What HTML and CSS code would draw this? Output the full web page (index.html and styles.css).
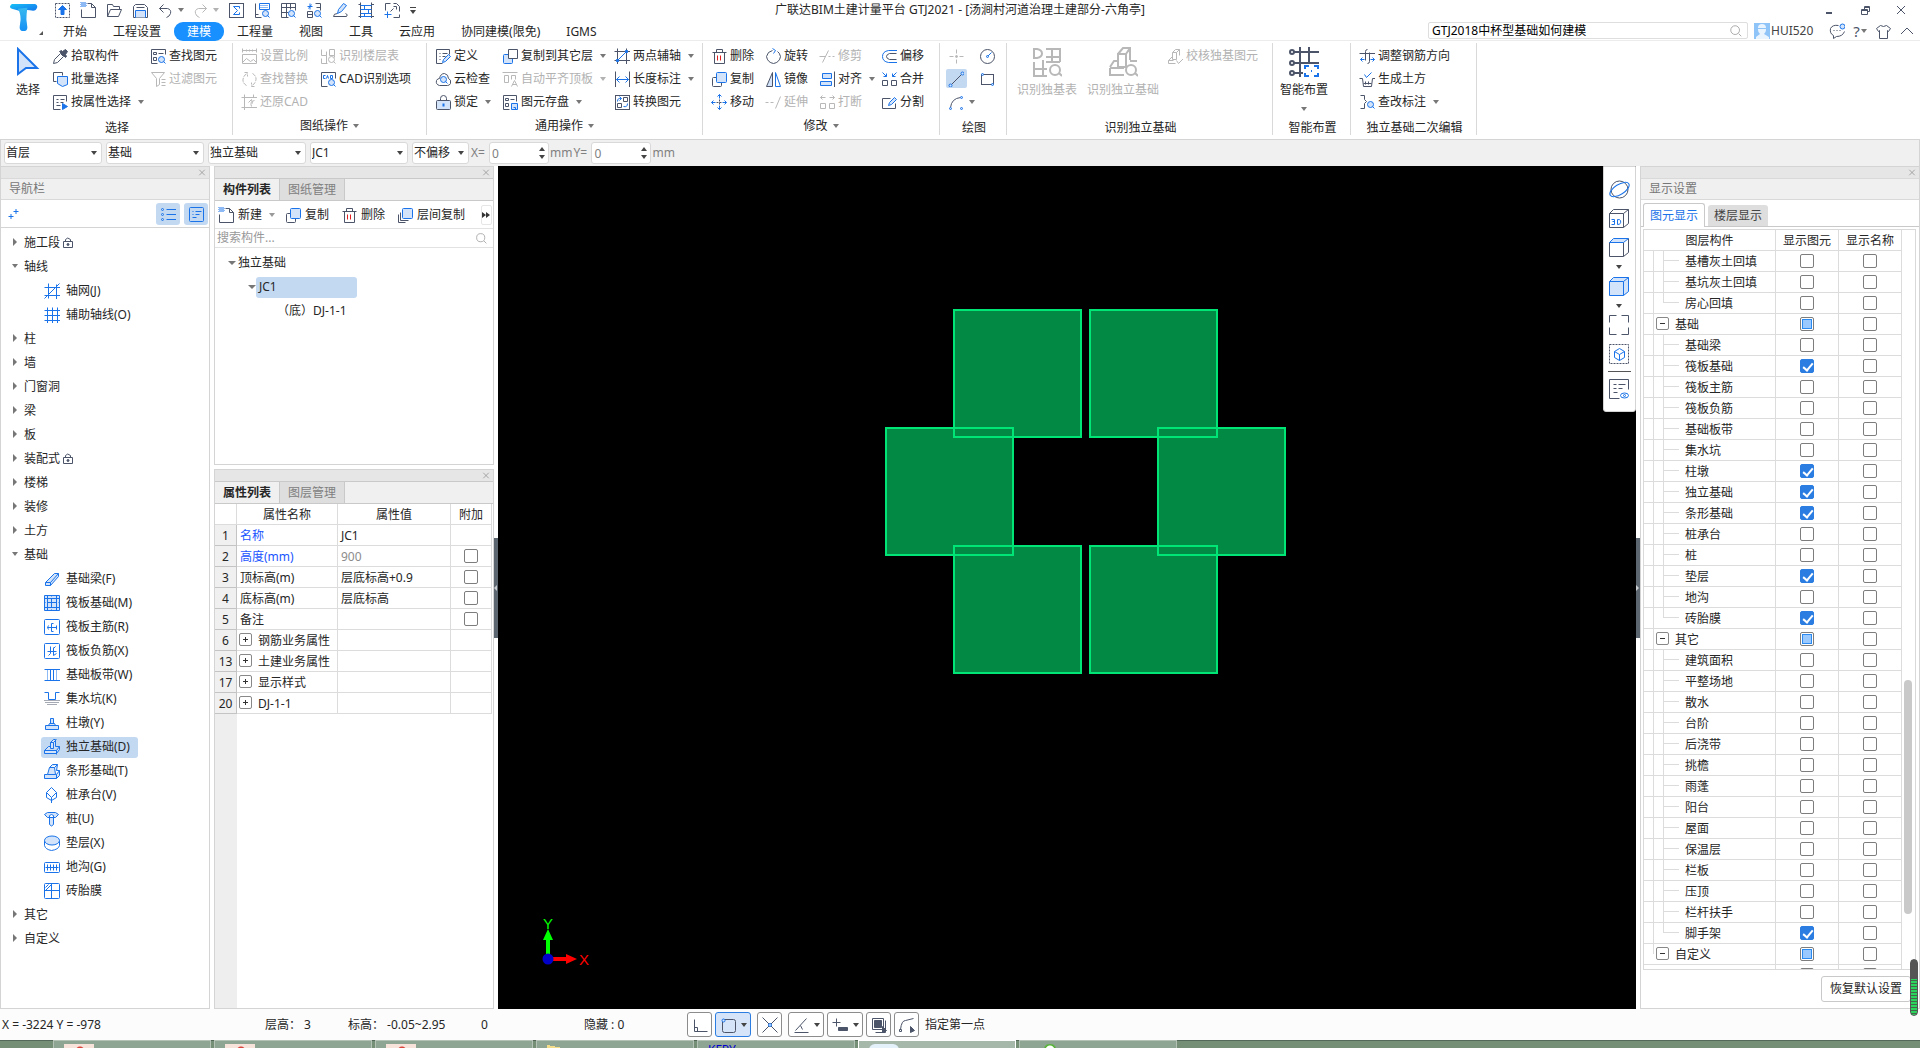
FILE: index.html
```
<!DOCTYPE html>
<html lang="zh-CN">
<head>
<meta charset="utf-8">
<title>广联达BIM土建计量平台 GTJ2021</title>
<link rel="stylesheet" href="styles.css">
</head>
<body>
<svg class="sprite" aria-hidden="true">
  <defs>
    <linearGradient id="logo-grad" x1="0" y1="0" x2="1" y2="1"><stop offset="0" stop-color="#19c3f5"/><stop offset=".5" stop-color="#1597f2"/><stop offset="1" stop-color="#1272ea"/></linearGradient>
    <linearGradient id="logo-stem" x1="0" y1="0" x2="0" y2="1"><stop offset="0" stop-color="#39b9ee"/><stop offset="1" stop-color="#1590f5"/></linearGradient>
  </defs>
  <symbol id="upload" viewBox="-.5 -.5 16 16"><rect x="1" y="1" width="14" height="14" stroke-dasharray="2 1"/><path class="b fill" d="M8 3l4 4H9.500v5h-3V7H4z"/></symbol>
  <symbol id="new" viewBox="-.5 -.5 16 16"><path d="M7 1h4l4 4v10H1V7M11 1v4h4"/><path class="b" stroke-dasharray="1 1" d="M0 0h5M1 1h5M0 2h5M1 3h5M0 4h5"/></symbol>
  <symbol id="open" viewBox="-.5 -.5 16 16"><path d="M1 14V2h5l1 2h6v3M1 14L4 7h11l-3 7z"/></symbol>
  <symbol id="save" viewBox="-.5 -.5 16 16"><path d="M3 2h9l3 3v10H1V4z"/><path class="bf" d="M3 15V8h10v7"/><path d="M4 5h8"/></symbol>
  <symbol id="undo" viewBox="-.5 -.5 16 16"><path d="M2 6h8q4 1 3 5-1 3-4 4M6 2L2 6l4 4"/></symbol>
  <symbol id="redo" viewBox="-.5 -.5 16 16"><path d="M14 6H6Q2 7 3 11q1 3 4 4M10 2l4 4-4 4"/></symbol>
  <symbol id="sigma" viewBox="-.5 -.5 16 16"><rect x="1" y="1" width="14" height="14"/><path class="b" d="M11 6V4H5l4 4-4 4h6v-2"/></symbol>
  <symbol id="calc" viewBox="-.5 -.5 16 16"><path d="M1 1v14h6M1 12h3"/><path class="b" d="M5 1h10v6H5z"/><path class="b" stroke-dasharray="1 1" d="M6 3h8M6 5h8"/><circle class="bf" cx="11" cy="11" r="3"/><path class="b" d="M13 13l2 2"/></symbol>
  <symbol id="gridfind" viewBox="-.5 -.5 16 16"><path d="M8 15H1V1h14v7M6 1v14M10 1v6M1 5h14M1 10h7"/><circle class="bf" cx="11" cy="11" r="3"/><path class="b" d="M13 13l2 2"/></symbol>
  <symbol id="viewfind" viewBox="-.5 -.5 16 16"><path d="M9 1h5v7M10 5h4M1 9h5v6H1zM1 12h5"/><path class="b" d="M1 4h5M3.500 1v6M5 2L2 6"/><circle class="bf" cx="11" cy="11" r="3"/><path class="b" d="M13 13l2 2"/></symbol>
  <symbol id="brush" viewBox="-.5 -.5 16 16"><path d="M1 14h13q2-2-1-3M5 11q-4 0-4 3"/><path class="bf" d="M5 11l1-4 5-6 3 2-5 6z"/></symbol>
  <symbol id="ladder" viewBox="-.5 -.5 16 16"><path d="M2 0v16M13 0v16M0 2h2M0 14h2M13 2h3M13 14h3"/><path class="b" d="M2 3h11M2 7h11M2 11h11M2 14h11M6 3v4M10 7v4M6 11v3"/></symbol>
  <symbol id="frameadd" viewBox="-.5 -.5 16 16"><path d="M1 8V1h5M9 1h3l3 3v5M15 12v3H9M9 4h3v3M6 9l3-3"/><path class="b" d="M0 12h7M3 9v7"/></symbol>
  <symbol id="cursor" viewBox="0 0 30 30"><path class="bf thick" d="M5 2v25l8-6h11z"/></symbol>
  <symbol id="picker" viewBox="-.5 -.5 16 16"><path d="M1 15l1-4 6-6 3 3-6 6z"/><path class="kf" d="M7 3l6 6 1-1-1-2 2-3-2-2-3 2-1-1z"/></symbol>
  <symbol id="batch" viewBox="-.5 -.5 16 16"><path d="M4 10H1V1h9v3"/><path class="bf" d="M5 5h10v8l-5 2-5-3z"/></symbol>
  <symbol id="attrsel" viewBox="-.5 -.5 16 16"><path d="M8 15H1V1h13v6M4 5h2M8 5h4M4 8h2M8 8h3M4 11h4"/><path class="b fill" d="M10 9v6l5-3z"/></symbol>
  <symbol id="findelem" viewBox="-.5 -.5 16 16"><path d="M7 15H1V1h14v5M3 4h3v2H3zM8 5h5M3 9h3v3H3z"/><circle class="bf" cx="11" cy="11" r="3"/><path class="b" d="M13 13l2 2"/></symbol>
  <symbol id="filter" viewBox="-.5 -.5 16 16"><path d="M1 1h13L9 7v6l-3 2V7zM11 8h4M11 11h4M11 14h4"/></symbol>
  <symbol id="scale" viewBox="-.5 -.5 16 16"><path d="M1 2h14M1 0v4M15 0v4M5 1v2M8 1v2M11 1v2M1 6h14v9H1zM1 14l4-4 4 3 3-2 3 3"/></symbol>
  <symbol id="layertab" viewBox="-.5 -.5 16 16"><path d="M1 1v6h5V3M9 1h5v6H9zM1 10v5h6M6 7v8M14 7v2"/><circle cx="11" cy="11" r="3"/><path d="M13 13l2 2"/></symbol>
  <symbol id="swap" viewBox="-.5 -.5 16 16"><path d="M5 14Q0 11 2 6q1-3 4-4M3 1h3v4M11 2q5 3 3 8-1 3-4 4M13 15h-3v-4" stroke-dasharray="4 1"/></symbol>
  <symbol id="cad" viewBox="-.5 -.5 16 16"><path d="M7 15H1V1h14v6"/><path class="b" d="M5 4H3v3h2M6 7l1-3 1 3M10 4v3h2V4z"/><circle class="bf" cx="11" cy="11" r="3"/><path class="b" d="M13 13l2 2"/></symbol>
  <symbol id="restorecad" viewBox="-.5 -.5 16 16"><path d="M3 0v16M0 3h16M0 13h16M12 0v3M13 6q-5 1-3 6M7 8l3-3 1 4"/></symbol>
  <symbol id="define" viewBox="-.5 -.5 16 16"><path d="M7 15H1V1h13v5M4 5h1M7 5h5M4 8h1M7 8h3M4 11h1"/><path class="bf" d="M7 14l1-3 5-5 2 2-5 5z"/></symbol>
  <symbol id="cloud" viewBox="-.5 -.5 16 16"><path d="M4 14Q0 13 1 9q1-2 3-2 1-5 5-5 4 1 4 5 3 1 2 5-1 2-3 2z"/><circle class="bf" cx="8" cy="8" r="3"/><path class="b" d="M10 10l2 2"/></symbol>
  <symbol id="lock" viewBox="-.5 -.5 16 16"><path d="M5 6V4q0-3 3-3t3 3v2"/><rect class="kl" x="1" y="6" width="14" height="9" rx="1"/><path class="b thick" d="M8 9v3"/></symbol>
  <symbol id="copyto" viewBox="-.5 -.5 16 16"><rect class="bf" x="1" y="6" width="9" height="9" rx="1"/><path class="wf" d="M6 1h9v9H6z"/></symbol>
  <symbol id="align-top" viewBox="-.5 -.5 16 16"><path d="M0 1h15M2 4h4v7H2zM9 8V4h4v4M9 15l3-6 3 6M10 13h4"/></symbol>
  <symbol id="store" viewBox="-.5 -.5 16 16"><path d="M7 15H1V1h13v6M3 4h3v2H3zM8 5h4M3 9h3v3H3z"/><path class="bf" d="M9 9h6v6H9zM11 13h2v2"/></symbol>
  <symbol id="twopoint" viewBox="-.5 -.5 16 16"><path d="M3 0v16M12 0v16M0 3h16M0 12h16"/><path class="b" d="M3 12l9-9"/><path class="b fill" d="M2 11h2v2H2zM11 2h2v2h-2z"/></symbol>
  <symbol id="length" viewBox="-.5 -.5 16 16"><path d="M1 0v16M15 0v16"/><path class="b" d="M2 8h12M5 5L2 8l3 3M11 5l3 3-3 3"/></symbol>
  <symbol id="convert" viewBox="-.5 -.5 16 16"><rect x="1" y="1" width="14" height="14"/><path class="b" d="M3 7q0-4 4-3M5 2l2 2-2 2M13 9q0 4-4 3"/><path d="M9 3h4v4H9zM3 9h4v4H3z"/></symbol>
  <symbol id="trash" viewBox="-.5 -.5 16 16"><path d="M1 4h14M5 4V1h6v3M3 4v11h10V4"/><path class="r" d="M6 7v5M9 7v5"/></symbol>
  <symbol id="copy" viewBox="-.5 -.5 16 16"><rect x="1" y="6" width="9" height="9" rx="1"/><rect class="bf" x="5" y="1" width="10" height="10" rx="1"/></symbol>
  <symbol id="copies" viewBox="-.5 -.5 16 16"><path d="M1 7v8h7M3 5v8h8"/><rect class="bf" x="5" y="1" width="10" height="10" rx="1"/></symbol>
  <symbol id="move" viewBox="-.5 -.5 16 16"><path d="M8 5v6M5 8h6" stroke-dasharray="2 1"/><path class="b" d="M8 0v4M6 2l2-2 2 2M8 15v-4M6 13l2 2 2-2M0 8h4M2 6L0 8l2 2M15 8h-4M13 6l2 2-2 2"/></symbol>
  <symbol id="rotate" viewBox="-.5 -.5 16 16"><path d="M7 2Q2 3 1 8q1 6 7 7 6-1 7-7-1-4-3-5"/><path class="b" d="M7 0l3 2-2 3"/></symbol>
  <symbol id="mirror" viewBox="-.5 -.5 16 16"><path class="kl" d="M7 1v14H1z"/><path class="b" d="M10 1v14h5z"/></symbol>
  <symbol id="extend" viewBox="-.5 -.5 16 16"><path stroke-dasharray="3 2" d="M0 8h9"/><path d="M10 14L15 2"/></symbol>
  <symbol id="trim" viewBox="-.5 -.5 16 16"><path d="M0 8h6M3 14L9 2"/><path stroke-dasharray="2 2" d="M9 8h7"/></symbol>
  <symbol id="align" viewBox="-.5 -.5 16 16"><path d="M15 0v16"/><path class="bf" d="M3 2h9v5H3zM1 10h11v4H1z"/></symbol>
  <symbol id="break" viewBox="-.5 -.5 16 16"><path d="M1 9h5v5H1zM10 9h5v5h-5zM6 3H1M3 1L1 3l2 2M10 3h5M13 1l2 2-2 2"/></symbol>
  <symbol id="offset" viewBox="-.5 -.5 16 16"><path class="b" d="M16 2H7Q1 3 1 8q0 5 6 6h9"/><path d="M15 5H8Q5 6 5 8q0 2 3 3h7"/></symbol>
  <symbol id="merge" viewBox="-.5 -.5 16 16"><path d="M1 9h5v5H1zM10 9h5v5h-5z"/><path class="b" d="M1 1l4 4M5 2v3H2M15 1l-4 4M11 2v3h3"/></symbol>
  <symbol id="split" viewBox="-.5 -.5 16 16"><path d="M9 4H1v10h13V9"/><path class="bf" d="M7 11l1-3 5-5 2 2-5 5z"/></symbol>
  <symbol id="point" viewBox="-.5 -.5 16 16"><path d="M8 1v4M8 11v4M1 8h4M11 8h4"/><circle class="kf" cx="8" cy="8" r="1"/></symbol>
  <symbol id="line" viewBox="-.5 -.5 16 16"><path d="M3 13L13 3"/><circle class="bf" cx="2" cy="14" r="1.500"/><circle class="bf" cx="14" cy="2" r="1.500"/></symbol>
  <symbol id="arc" viewBox="-.5 -.5 16 16"><path d="M2 13Q3 4 12 3"/><circle class="bf" cx="2" cy="14" r="1"/><circle class="bf" cx="13" cy="3" r="1"/><circle class="bf" cx="13" cy="14" r="1"/></symbol>
  <symbol id="circle" viewBox="-.5 -.5 16 16"><circle cx="8" cy="8" r="7"/><path class="b" d="M8 8l4-4"/><circle class="bf" cx="8" cy="8" r="1"/></symbol>
  <symbol id="rect" viewBox="-.5 -.5 16 16"><rect x="2" y="3" width="12" height="10"/><circle class="bf" cx="3" cy="3" r="1"/><circle class="bf" cx="13" cy="13" r="1"/></symbol>
  <symbol id="table-id" viewBox="0 0 30 30"><path class="thick" d="M2 2v9h3q5-1 5-4.500T5 2zM14 2h14v13M14 10h14M20 2v13M14 15h14M2 15v14h13M11 13v16M2 22h13"/><circle class="thick" cx="23" cy="23" r="5"/><path class="thick" d="M27 26l3 3"/></symbol>
  <symbol id="found-id" viewBox="0 0 30 30"><path class="thick" d="M10 7h8v13h-8zM10 7l5-6h7v12M18 7l4-6M10 14H6l-4 6M2 21v7h14M2 21h14M22 14h7"/><circle class="thick" cx="23" cy="23" r="5"/><path class="thick" d="M27 26l3 3"/></symbol>
  <symbol id="check-id" viewBox="-.5 -.5 16 16"><path d="M5 4h4v7H5zM5 4l3-3h4v6M9 4l3-3M5 8L1 12v3h7M1 12h5M9 12l2 3 5-5"/></symbol>
  <symbol id="smart" viewBox="0 0 30 30"><path class="thick" d="M11 0v30M20 0v15M5 5h25M5 16h25M5 26h9"/><circle class="wf thick" cx="3" cy="5" r="2"/><circle class="wf thick" cx="3" cy="16" r="2"/><circle class="wf thick" cx="3" cy="26" r="2"/><path fill="#fff" stroke="none" d="M14 17h16v13H14z"/><path class="b thick" d="M16 22v-3h4M25 19h4v3M29 26v3h-4M20 29h-4v-3M22 24h1"/></symbol>
  <symbol id="rebar" viewBox="-.5 -.5 16 16"><path d="M0 5h16M6 12V3q0-2 2-2M10 4v9q0 2-2 2"/><path class="b" d="M5 11H1M3 9l-2 2 2 2M11 11h4M13 9l2 2-2 2"/></symbol>
  <symbol id="earth" viewBox="-.5 -.5 16 16"><path d="M0 7h3l1 8h8l1-8h3M4 12h8M6 10v3M9 10v3"/><path class="b" d="M5 3l2 3 5-5"/></symbol>
  <symbol id="note" viewBox="-.5 -.5 16 16"><path d="M1 1h4v4l2 2-2 2v5H1"/><circle class="bf" cx="11" cy="10" r="3"/><path class="b" d="M13 12l2 2"/></symbol>
  <symbol id="search" viewBox="0 0 16 16"><circle cx="7" cy="7" r="5"/><path d="M11 11l3 3"/></symbol>
  <symbol id="chat" viewBox="-.5 -.5 16 16"><path d="M9 2Q3 1 1 5q-1 5 3 7v3l3-2q6 0 8-5M4 7h1M7 7h1M10 7h1"/><circle class="bf" cx="13" cy="3" r="2.500"/></symbol>
  <symbol id="shirt" viewBox="-.5 -.5 16 16"><path d="M5 2q3 2 6 0l4 3-2 3-1-1v8H4V7L3 8 1 5z"/></symbol>
  <symbol id="chev" viewBox="0 0 16 16"><path d="M2 11l6-6 6 6"/></symbol>
  <symbol id="x" viewBox="0 0 16 16"><path d="M4 4l8 8M12 4l-8 8"/></symbol>
  <symbol id="restore" viewBox="-.5 -.5 16 16"><path d="M4 7h6v5H4zM4 8h6M7 7V4h5v5h-2M7 5h5"/></symbol>
  <symbol id="min" viewBox="0 0 16 16"><path class="thick" d="M5 11h6"/></symbol>
  <symbol id="stars" viewBox="-.5 -.5 16 16"><path class="b" d="M8 5h5M10.500 2.500v5M3 10h5M5.500 7.500v5"/></symbol>
  <symbol id="list" viewBox="-.5 -.5 16 16"><path class="b" d="M6 3h10M6 8h10M6 13h10"/><circle class="b" cx="2" cy="3" r="1"/><circle class="b" cx="2" cy="8" r="1"/><circle class="b" cx="2" cy="13" r="1"/></symbol>
  <symbol id="card" viewBox="-.5 -.5 16 16"><rect class="b" x="1" y="1" width="14" height="14" rx="1"/><path class="b" d="M4 5h1M7 5h6M4 8h1M7 8h4M4 11h4"/></symbol>
  <symbol id="padlock" viewBox="-.5 -.5 10 12"><path d="M2 4V2q2-3 5 0v2M0 4h9v6H0z"/><circle class="kf" cx="4.500" cy="7" r="1"/></symbol>
  <symbol id="axis" viewBox="-.5 -.5 16 16"><path class="b" d="M4 0v15M12 1v15M0 4h16M0 12h16M0 15L15 0"/></symbol>
  <symbol id="axis2" viewBox="-.5 -.5 16 16"><path class="b" d="M3 0v16M8 0v16M13 0v16M0 3h16M0 8h16M0 13h16"/></symbol>
  <symbol id="n-beam" viewBox="-.5 -.5 16 16"><path class="bf" d="M1 11L10 2h4v3L6 14H1zM1 11h5v3M6 11l8-9"/></symbol>
  <symbol id="n-raft" viewBox="-.5 -.5 16 16"><path class="bf" d="M0 0h15v15H0z"/><path class="b" d="M3 0v15M7 3v9M12 0v15M0 3h15M3 7h9M0 12h15M7 0v1M7 14v1M0 7h1M14 7h1"/></symbol>
  <symbol id="n-main" viewBox="-.5 -.5 16 16"><rect class="b" x="0" y="0" width="15" height="15" rx="1"/><path class="b" d="M3 8h9M4 6L3 8l1 2M12 6v4M7 12V4h2M9 12H7"/></symbol>
  <symbol id="n-neg" viewBox="-.5 -.5 16 16"><rect class="b" x="0" y="0" width="15" height="15" rx="1"/><path class="b" d="M3 8h9M6 3v7l-2 2M9 4v8M9 5l2-2M12 10l-3 2"/></symbol>
  <symbol id="n-strip" viewBox="-.5 -.5 16 16"><path class="b" d="M0 2h16M0 13h16"/><path class="b" stroke-dasharray="1 1" d="M3 3v10M12 3v10"/><path class="b" d="M6 2v11M9 2v11"/></symbol>
  <symbol id="n-pit" viewBox="-.5 -.5 16 16"><path class="b" d="M0 1h4v7h7V1h4"/><path stroke-dasharray="1 1" d="M0 9h16M1 11h14M3 13h10"/></symbol>
  <symbol id="n-pier" viewBox="-.5 -.5 16 16"><path class="bf" d="M1 10h13v4H1zM6 3h3v5H6zM4 10l1-2h5l1 2"/></symbol>
  <symbol id="n-found" viewBox="-.5 -.5 16 16"><path class="bf" d="M0 11l4-4h2V3l3-3h2v7h4v3l-3 4H0zM6 3h3v6H6zM9 3l3-3M0 11h12l3-4M12 11v4"/></symbol>
  <symbol id="n-bar" viewBox="-.5 -.5 16 16"><path class="bf" d="M0 11h3l2-7 3-3h5l-1 6h3v5l-3 3H0zM5 4h5l3-3M10 4l1 7h1l3-4M3 11h8M12 11v4"/></symbol>
  <symbol id="n-cap" viewBox="-.5 -.5 16 16"><path class="b" d="M7 0L2 5l5 5 5-5zM2 5v5l5 3 5-3V5M7 10v6"/></symbol>
  <symbol id="n-pile" viewBox="-.5 -.5 16 16"><path class="bf" d="M0 3l3-2h8l3 2-3 3H3zM5 4v9q2 3 4 0V4q-2-2-4 0"/></symbol>
  <symbol id="n-cushion" viewBox="-.5 -.5 16 16"><path class="b" d="M0 5v5q1 4 7 5 7-1 8-5V5"/><ellipse class="bf" cx="7.500" cy="5" rx="7.500" ry="4.500"/></symbol>
  <symbol id="n-trench" viewBox="-.5 -.5 16 16"><rect class="b" x="0" y="3" width="15" height="10" rx="1"/><path class="b" d="M1 8h13M3 5v6M6 5v6M9 5v6M12 5v6"/></symbol>
  <symbol id="n-brick" viewBox="-.5 -.5 16 16"><rect class="b" x="0" y="0" width="15" height="15" rx="1"/><path class="b" d="M7 0v15M0 7h15M1 4l3-3M1 7l6-6"/></symbol>
  <symbol id="v-orbit" viewBox="-.5 -.5 20 20"><circle cx="10" cy="10" r="8.500"/><ellipse class="b" cx="10" cy="10" rx="11" ry="5" transform="rotate(-32 10 10)"/></symbol>
  <symbol id="v-3d" viewBox="-.5 -.5 20 20"><path d="M0 5h14v14H0zM0 5l4-4h15v14l-5 4M14 5l5-4"/><path class="b" d="M2 11h3v5H2M3 13h2M8 11v5q4 0 3-4 0-1-3-1"/></symbol>
  <symbol id="v-top" viewBox="-.5 -.5 20 20"><path d="M0 5h14v14H0zM19 1v14l-5 4"/><path class="bf" d="M0 5l4-4h15l-5 4z"/></symbol>
  <symbol id="v-solid" viewBox="-.5 -.5 20 20"><path class="bf" d="M0 5l4-4h15v14l-5 4H0z"/><path class="b" d="M0 5h14v14M14 5l5-4"/></symbol>
  <symbol id="v-fit" viewBox="-.5 -.5 20 20"><path d="M0 7V0h7M12 0h7v7M19 12v7h-7M7 19H0v-7"/></symbol>
  <symbol id="v-part" viewBox="-.5 -.5 20 20"><rect x="0" y="0" width="19" height="19" stroke-dasharray="2 1"/><path class="b" d="M10 4l5 3v6l-5 3-5-3V7zM5 7l5 3 5-3M10 10v6"/></symbol>
  <symbol id="v-eye" viewBox="-.5 -.5 20 20"><path d="M10 19H0V0h19v10M4 5h3M9 5h7M4 9h3M9 9h4M4 13h4"/><ellipse class="b" cx="15" cy="16" rx="4" ry="2.500"/><circle class="b" cx="15" cy="16" r="1"/></symbol>
  <symbol id="s-ortho" viewBox="-.5 -.5 16 16"><path d="M2 2v12h13M2 10h3v4"/></symbol>
  <symbol id="s-snap" viewBox="-.5 -.5 16 16"><rect x="2" y="2" width="13" height="13" rx="2"/><circle class="bf" cx="3" cy="3" r="1.500"/></symbol>
  <symbol id="s-cross" viewBox="-.5 -.5 16 16"><path d="M0 0l15 15M15 0L0 15"/><circle class="bf" cx="7.500" cy="7.500" r="1.500"/></symbol>
  <symbol id="s-angle" viewBox="-.5 -.5 16 16"><path d="M2 13L13 1M1 15h14M7 8l2 4"/></symbol>
  <symbol id="s-plus" viewBox="-.5 -.5 16 16"><path d="M0 5h8M4 1v8"/><path class="kf" d="M6 10h9v3H6z"/></symbol>
  <symbol id="s-layers" viewBox="-.5 -.5 16 16"><path class="kf" d="M3 3h7v7H3z"/><path d="M1 1h11v11H1zM14 3v12H4"/><path class="kf" d="M11 9v6l4-2z"/></symbol>
  <symbol id="s-poly" viewBox="-.5 -.5 16 16"><path d="M1 12Q2 3 6 3l8-2M0 12h2v2H0z"/><path class="kf" d="M11 9v6l4-2z"/></symbol>
</svg>

<div class="app">
  <header class="top">
    <button class="logo" aria-label="主菜单">
      <svg class="logo-mark" viewBox="0 0 30 30"><path fill="url(#logo-grad)" d="M3 1h24q3 1 2 4-1 3-4 3-9-2-11 1L3 6Q-1 4 3 1z"/><path fill="url(#logo-stem)" d="M9 6l10-1q-1 7-1 12l1 8q0 4-4 4t-4-4l1-8q0-7-3-11z"/></svg>
      <span class="corner"></span>
    </button>
    <div class="titlebar">
      <div class="quick">
        <button aria-label="上传"><svg class="ic"><use href="#upload"/></svg></button>
        <button aria-label="新建"><svg class="ic"><use href="#new"/></svg></button>
        <button aria-label="打开"><svg class="ic"><use href="#open"/></svg></button>
        <button aria-label="保存"><svg class="ic"><use href="#save"/></svg></button>
        <button class="split" aria-label="撤销"><svg class="ic"><use href="#undo"/></svg><span class="caret"></span></button>
        <button class="split dim" aria-label="恢复"><svg class="ic"><use href="#redo"/></svg><span class="caret"></span></button>
        <button aria-label="汇总计算"><svg class="ic"><use href="#sigma"/></svg></button>
        <button aria-label="查看计算式"><svg class="ic"><use href="#calc"/></svg></button>
        <button aria-label="查看工程量"><svg class="ic"><use href="#gridfind"/></svg></button>
        <button aria-label="查看报表"><svg class="ic"><use href="#viewfind"/></svg></button>
        <button aria-label="格式刷"><svg class="ic"><use href="#brush"/></svg></button>
        <button aria-label="钢筋三维"><svg class="ic"><use href="#ladder"/></svg></button>
        <button aria-label="局部三维"><svg class="ic"><use href="#frameadd"/></svg></button>
        <button class="more" aria-label="更多"><span class="caret"></span></button>
      </div>
      <h1 class="title">广联达BIM土建计量平台 GTJ2021 - [汤涧村河道治理土建部分-六角亭]</h1>
      <div class="winbtns">
        <button aria-label="最小化"><svg class="ic"><use href="#min"/></svg></button>
        <button aria-label="还原"><svg class="ic"><use href="#restore"/></svg></button>
        <button aria-label="关闭"><svg class="ic"><use href="#x"/></svg></button>
      </div>
    </div>
    <div class="menubar">
      <nav class="menus">
        <button>开始</button><button>工程设置</button><button class="on">建模</button><button>工程量</button><button>视图</button><button>工具</button><button>云应用</button><button>协同建模(限免)</button><button>IGMS</button>
      </nav>
      <div class="account">
        <div class="find"><input type="text" aria-label="搜索" value="GTJ2018中杯型基础如何建模"><svg class="ic pale"><use href="#search"/></svg></div>
        <button class="user"><svg class="avatar" viewBox="0 0 16 16"><rect width="16" height="16" fill="#8fc4f8"/><path fill="#e9f4ff" d="M4 5q0-4 4-4t4 4v2q0 2-2 4l5 3v2H2v-2l4-3Q4 9 4 7z"/><path fill="#8fc4f8" d="M3 5h10v1H3z"/></svg>HUI520</button>
        <div class="acts">
          <button aria-label="消息"><svg class="ic"><use href="#chat"/></svg></button>
          <button class="help">?<span class="caret"></span></button>
          <button aria-label="皮肤"><svg class="ic"><use href="#shirt"/></svg></button>
          <button aria-label="收起"><svg class="ic"><use href="#chev"/></svg></button>
        </div>
      </div>
    </div>
  </header>

  <section class="ribbon">
    <div class="group g-select">
      <div class="cmds">
        <button class="big"><svg class="ic l"><use href="#cursor"/></svg>选择</button>
        <button class="cmd"><svg class="ic"><use href="#picker"/></svg>拾取构件</button>
        <button class="cmd"><svg class="ic"><use href="#batch"/></svg>批量选择</button>
        <button class="cmd"><svg class="ic"><use href="#attrsel"/></svg>按属性选择<span class="caret"></span></button>
        <button class="cmd"><svg class="ic"><use href="#findelem"/></svg>查找图元</button>
        <button class="cmd dim"><svg class="ic"><use href="#filter"/></svg>过滤图元</button>
      </div>
      <div class="gname low">选择</div>
    </div>
    <div class="group g-sheet">
      <div class="cmds">
        <button class="cmd dim"><svg class="ic"><use href="#scale"/></svg>设置比例</button>
        <button class="cmd dim"><svg class="ic"><use href="#swap"/></svg>查找替换</button>
        <button class="cmd dim"><svg class="ic"><use href="#restorecad"/></svg>还原CAD</button>
        <button class="cmd dim"><svg class="ic"><use href="#layertab"/></svg>识别楼层表</button>
        <button class="cmd"><svg class="ic"><use href="#cad"/></svg>CAD识别选项</button>
      </div>
      <button class="gname">图纸操作<span class="caret"></span></button>
    </div>
    <div class="group g-common">
      <div class="cmds">
        <button class="cmd"><svg class="ic"><use href="#define"/></svg>定义</button>
        <button class="cmd"><svg class="ic"><use href="#cloud"/></svg>云检查</button>
        <button class="cmd"><svg class="ic"><use href="#lock"/></svg>锁定<span class="caret"></span></button>
        <button class="cmd"><svg class="ic"><use href="#copyto"/></svg>复制到其它层<span class="caret"></span></button>
        <button class="cmd dim"><svg class="ic"><use href="#align-top"/></svg>自动平齐顶板<span class="caret"></span></button>
        <button class="cmd"><svg class="ic"><use href="#store"/></svg>图元存盘<span class="caret"></span></button>
        <button class="cmd"><svg class="ic"><use href="#twopoint"/></svg>两点辅轴<span class="caret"></span></button>
        <button class="cmd"><svg class="ic"><use href="#length"/></svg>长度标注<span class="caret"></span></button>
        <button class="cmd"><svg class="ic"><use href="#convert"/></svg>转换图元</button>
      </div>
      <button class="gname">通用操作<span class="caret"></span></button>
    </div>
    <div class="group g-modify">
      <div class="cmds">
        <button class="cmd"><svg class="ic"><use href="#trash"/></svg>删除</button>
        <button class="cmd"><svg class="ic"><use href="#copy"/></svg>复制</button>
        <button class="cmd"><svg class="ic"><use href="#move"/></svg>移动</button>
        <button class="cmd"><svg class="ic"><use href="#rotate"/></svg>旋转</button>
        <button class="cmd"><svg class="ic"><use href="#mirror"/></svg>镜像</button>
        <button class="cmd dim"><svg class="ic"><use href="#extend"/></svg>延伸</button>
        <button class="cmd dim"><svg class="ic"><use href="#trim"/></svg>修剪</button>
        <button class="cmd"><svg class="ic"><use href="#align"/></svg>对齐<span class="caret"></span></button>
        <button class="cmd dim"><svg class="ic"><use href="#break"/></svg>打断</button>
        <button class="cmd"><svg class="ic"><use href="#offset"/></svg>偏移</button>
        <button class="cmd"><svg class="ic"><use href="#merge"/></svg>合并</button>
        <button class="cmd"><svg class="ic"><use href="#split"/></svg>分割</button>
      </div>
      <button class="gname">修改<span class="caret"></span></button>
    </div>
    <div class="group g-draw">
      <div class="cmds">
        <button class="tool dim" aria-label="点"><svg class="ic"><use href="#point"/></svg></button>
        <button class="tool on" aria-label="直线"><svg class="ic"><use href="#line"/></svg></button>
        <button class="tool" aria-label="弧"><svg class="ic"><use href="#arc"/></svg><span class="caret"></span></button>
        <button class="tool" aria-label="圆"><svg class="ic"><use href="#circle"/></svg></button>
        <button class="tool" aria-label="矩形"><svg class="ic"><use href="#rect"/></svg></button>
      </div>
      <div class="gname low">绘图</div>
    </div>
    <div class="group g-detect">
      <div class="cmds">
        <button class="big dim"><svg class="ic l"><use href="#table-id"/></svg>识别独基表</button>
        <button class="big dim"><svg class="ic l"><use href="#found-id"/></svg>识别独立基础</button>
        <button class="cmd dim"><svg class="ic"><use href="#check-id"/></svg>校核独基图元</button>
      </div>
      <div class="gname low">识别独立基础</div>
    </div>
    <div class="group g-smart">
      <div class="cmds">
        <button class="big"><svg class="ic l"><use href="#smart"/></svg>智能布置<span class="caret"></span></button>
      </div>
      <div class="gname low">智能布置</div>
    </div>
    <div class="group g-second">
      <div class="cmds">
        <button class="cmd"><svg class="ic"><use href="#rebar"/></svg>调整钢筋方向</button>
        <button class="cmd"><svg class="ic"><use href="#earth"/></svg>生成土方</button>
        <button class="cmd"><svg class="ic"><use href="#note"/></svg>查改标注<span class="caret"></span></button>
      </div>
      <div class="gname low">独立基础二次编辑</div>
    </div>
  </section>

  <section class="options">
    <select aria-label="楼层"><option>首层</option></select>
    <select aria-label="构件大类"><option>基础</option></select>
    <select aria-label="构件类型"><option>独立基础</option></select>
    <select aria-label="构件"><option>JC1</option></select>
    <select class="narrow" aria-label="偏移方式"><option>不偏移</option></select>
    <div class="offs">
      <label for="off-x">X=</label><span class="spin"><input id="off-x" type="text" value="0"><span class="ud"></span></span><span>mm</span>
      <label for="off-y">Y=</label><span class="spin"><input id="off-y" type="text" value="0"><span class="ud"></span></span><span>mm</span>
    </div>
  </section>

  <main class="work">
    <aside class="panel nav">
      <div class="grip"><button aria-label="关闭"><svg class="ic"><use href="#x"/></svg></button></div>
      <h2 class="ptitle">导航栏</h2>
      <div class="navtools">
        <button aria-label="添加"><svg class="ic"><use href="#stars"/></svg></button>
        <span class="grow"></span>
        <button class="on" aria-label="列表"><svg class="ic"><use href="#list"/></svg></button>
        <button class="on" aria-label="卡片"><svg class="ic"><use href="#card"/></svg></button>
      </div>
      <ul class="tree">
        <li class="shut">施工段<svg class="pad"><use href="#padlock"/></svg></li>
        <li class="open">轴线</li>
        <li class="kid"><span><svg class="ic"><use href="#axis"/></svg>轴网(J)</span></li>
        <li class="kid"><span><svg class="ic"><use href="#axis2"/></svg>辅助轴线(O)</span></li>
        <li class="shut">柱</li>
        <li class="shut">墙</li>
        <li class="shut">门窗洞</li>
        <li class="shut">梁</li>
        <li class="shut">板</li>
        <li class="shut">装配式<svg class="pad"><use href="#padlock"/></svg></li>
        <li class="shut">楼梯</li>
        <li class="shut">装修</li>
        <li class="shut">土方</li>
        <li class="open">基础</li>
        <li class="kid"><span><svg class="ic"><use href="#n-beam"/></svg>基础梁(F)</span></li>
        <li class="kid"><span><svg class="ic"><use href="#n-raft"/></svg>筏板基础(M)</span></li>
        <li class="kid"><span><svg class="ic"><use href="#n-main"/></svg>筏板主筋(R)</span></li>
        <li class="kid"><span><svg class="ic"><use href="#n-neg"/></svg>筏板负筋(X)</span></li>
        <li class="kid"><span><svg class="ic"><use href="#n-strip"/></svg>基础板带(W)</span></li>
        <li class="kid"><span><svg class="ic"><use href="#n-pit"/></svg>集水坑(K)</span></li>
        <li class="kid"><span><svg class="ic"><use href="#n-pier"/></svg>柱墩(Y)</span></li>
        <li class="kid sel"><span><svg class="ic"><use href="#n-found"/></svg>独立基础(D)</span></li>
        <li class="kid"><span><svg class="ic"><use href="#n-bar"/></svg>条形基础(T)</span></li>
        <li class="kid"><span><svg class="ic"><use href="#n-cap"/></svg>桩承台(V)</span></li>
        <li class="kid"><span><svg class="ic"><use href="#n-pile"/></svg>桩(U)</span></li>
        <li class="kid"><span><svg class="ic"><use href="#n-cushion"/></svg>垫层(X)</span></li>
        <li class="kid"><span><svg class="ic"><use href="#n-trench"/></svg>地沟(G)</span></li>
        <li class="kid"><span><svg class="ic"><use href="#n-brick"/></svg>砖胎膜</span></li>
        <li class="shut">其它</li>
        <li class="shut">自定义</li>
      </ul>
    </aside>

    <div class="side">
      <section class="panel comps">
        <div class="grip"><button aria-label="关闭"><svg class="ic"><use href="#x"/></svg></button></div>
        <div class="tabs"><button class="on">构件列表</button><button>图纸管理</button></div>
        <div class="comptools">
          <button class="cmd"><svg class="ic"><use href="#new"/></svg>新建<span class="caret"></span></button>
          <button class="cmd"><svg class="ic"><use href="#copy"/></svg>复制</button>
          <button class="cmd"><svg class="ic"><use href="#trash"/></svg>删除</button>
          <button class="cmd"><svg class="ic"><use href="#copies"/></svg>层间复制</button>
          <button class="over" aria-label="更多"><svg viewBox="0 0 8 6"><path d="M0 0l4 3-4 3zM4 0l4 3-4 3z"/></svg></button>
        </div>
        <div class="compfind"><input type="text" aria-label="搜索构件" placeholder="搜索构件..."><svg class="ic pale"><use href="#search"/></svg></div>
        <ul class="ctree">
          <li class="open">独立基础</li>
          <li class="open two"><span class="pick">JC1</span></li>
          <li class="three">（底）DJ-1-1</li>
        </ul>
      </section>
      <section class="panel props">
        <div class="grip"><button aria-label="关闭"><svg class="ic"><use href="#x"/></svg></button></div>
        <div class="tabs"><button class="on">属性列表</button><button>图层管理</button></div>
        <div class="pbody">
          <table class="ptable">
            <thead><tr><th class="no"></th><th class="nm">属性名称</th><th class="vl">属性值</th><th>附加</th></tr></thead>
            <tbody>
              <tr><td>1</td><td class="key">名称</td><td>JC1</td><td></td></tr>
              <tr><td>2</td><td class="key">高度(mm)</td><td class="mute">900</td><td><input type="checkbox" aria-label="附加 高度"></td></tr>
              <tr><td>3</td><td>顶标高(m)</td><td>层底标高+0.9</td><td><input type="checkbox" aria-label="附加 顶标高"></td></tr>
              <tr><td>4</td><td>底标高(m)</td><td>层底标高</td><td><input type="checkbox" aria-label="附加 底标高"></td></tr>
              <tr><td>5</td><td>备注</td><td></td><td><input type="checkbox" aria-label="附加 备注"></td></tr>
              <tr><td>6</td><td><button class="pm plus" aria-label="展开"></button>钢筋业务属性</td><td></td><td></td></tr>
              <tr><td>13</td><td><button class="pm plus" aria-label="展开"></button>土建业务属性</td><td></td><td></td></tr>
              <tr><td>17</td><td><button class="pm plus" aria-label="展开"></button>显示样式</td><td></td><td></td></tr>
              <tr><td>20</td><td><button class="pm plus" aria-label="展开"></button>DJ-1-1</td><td></td><td></td></tr>
            </tbody>
          </table>
        </div>
      </section>
    </div>

    <div class="gutter"><span class="handle"></span></div>

    <section class="canvas">
      <svg class="drawing" width="100%" height="100%">
        <g class="pads">
          <rect x="456" y="144" width="127" height="127"/><rect x="592" y="144" width="127" height="127"/>
          <rect x="388" y="262" width="127" height="127"/><rect x="660" y="262" width="127" height="127"/>
          <rect x="456" y="380" width="127" height="127"/><rect x="592" y="380" width="127" height="127"/>
        </g>
        <g class="edges">
          <rect x="456" y="144" width="127" height="127"/><rect x="592" y="144" width="127" height="127"/>
          <rect x="388" y="262" width="127" height="127"/><rect x="660" y="262" width="127" height="127"/>
          <rect x="456" y="380" width="127" height="127"/><rect x="592" y="380" width="127" height="127"/>
        </g>
        <path fill="#00ff00" d="M48 793V774h-3l5-11 5 11h-3v19z"/>
        <path fill="#ff0000" d="M50 791h18v-3l11 5-11 5v-3H50z"/>
        <circle fill="#0000c8" cx="50" cy="793" r="5.500"/>
        <text class="ax y" x="50" y="763">Y</text>
        <text class="ax x" x="86" y="799">X</text>
      </svg>
      <div class="viewbar">
        <button aria-label="动态观察"><svg><use href="#v-orbit"/></svg></button>
        <button aria-label="三维"><svg><use href="#v-3d"/></svg></button>
        <button class="drop" aria-label="俯视"><svg><use href="#v-top"/></svg><span class="caret"></span></button>
        <button class="drop" aria-label="实体"><svg><use href="#v-solid"/></svg><span class="caret"></span></button>
        <button aria-label="全屏"><svg><use href="#v-fit"/></svg></button>
        <button aria-label="局部三维"><svg><use href="#v-part"/></svg></button>
        <hr>
        <button aria-label="显示设置"><svg><use href="#v-eye"/></svg></button>
      </div>
    </section>

    <div class="gutter"><span class="handle r"></span></div>

    <aside class="panel display">
      <div class="grip"><button aria-label="关闭"><svg class="ic"><use href="#x"/></svg></button></div>
      <h2 class="ptitle">显示设置</h2>
      <div class="dtabs"><button class="on">图元显示</button><button>楼层显示</button></div>
      <div class="dbox">
        <table class="dtable">
          <thead><tr><th class="nm">图层构件</th><th>显示图元</th><th>显示名称</th></tr></thead>
          <tbody>
            <tr><td class="leaf">基槽灰土回填</td><td><input type="checkbox" aria-label="显示图元"></td><td><input type="checkbox" aria-label="显示名称"></td></tr>
            <tr><td class="leaf">基坑灰土回填</td><td><input type="checkbox" aria-label="显示图元"></td><td><input type="checkbox" aria-label="显示名称"></td></tr>
            <tr><td class="leaf end">房心回填</td><td><input type="checkbox" aria-label="显示图元"></td><td><input type="checkbox" aria-label="显示名称"></td></tr>
            <tr><td class="node"><button class="pm" aria-label="收起"></button>基础</td><td><input type="checkbox" class="mixed" aria-label="显示图元"></td><td><input type="checkbox" aria-label="显示名称"></td></tr>
            <tr><td class="leaf">基础梁</td><td><input type="checkbox" aria-label="显示图元"></td><td><input type="checkbox" aria-label="显示名称"></td></tr>
            <tr><td class="leaf">筏板基础</td><td><input type="checkbox" checked aria-label="显示图元"></td><td><input type="checkbox" aria-label="显示名称"></td></tr>
            <tr><td class="leaf">筏板主筋</td><td><input type="checkbox" aria-label="显示图元"></td><td><input type="checkbox" aria-label="显示名称"></td></tr>
            <tr><td class="leaf">筏板负筋</td><td><input type="checkbox" aria-label="显示图元"></td><td><input type="checkbox" aria-label="显示名称"></td></tr>
            <tr><td class="leaf">基础板带</td><td><input type="checkbox" aria-label="显示图元"></td><td><input type="checkbox" aria-label="显示名称"></td></tr>
            <tr><td class="leaf">集水坑</td><td><input type="checkbox" aria-label="显示图元"></td><td><input type="checkbox" aria-label="显示名称"></td></tr>
            <tr><td class="leaf">柱墩</td><td><input type="checkbox" checked aria-label="显示图元"></td><td><input type="checkbox" aria-label="显示名称"></td></tr>
            <tr><td class="leaf">独立基础</td><td><input type="checkbox" checked aria-label="显示图元"></td><td><input type="checkbox" aria-label="显示名称"></td></tr>
            <tr><td class="leaf">条形基础</td><td><input type="checkbox" checked aria-label="显示图元"></td><td><input type="checkbox" aria-label="显示名称"></td></tr>
            <tr><td class="leaf">桩承台</td><td><input type="checkbox" aria-label="显示图元"></td><td><input type="checkbox" aria-label="显示名称"></td></tr>
            <tr><td class="leaf">桩</td><td><input type="checkbox" aria-label="显示图元"></td><td><input type="checkbox" aria-label="显示名称"></td></tr>
            <tr><td class="leaf">垫层</td><td><input type="checkbox" checked aria-label="显示图元"></td><td><input type="checkbox" aria-label="显示名称"></td></tr>
            <tr><td class="leaf">地沟</td><td><input type="checkbox" aria-label="显示图元"></td><td><input type="checkbox" aria-label="显示名称"></td></tr>
            <tr><td class="leaf end">砖胎膜</td><td><input type="checkbox" checked aria-label="显示图元"></td><td><input type="checkbox" aria-label="显示名称"></td></tr>
            <tr><td class="node"><button class="pm" aria-label="收起"></button>其它</td><td><input type="checkbox" class="mixed" aria-label="显示图元"></td><td><input type="checkbox" aria-label="显示名称"></td></tr>
            <tr><td class="leaf">建筑面积</td><td><input type="checkbox" aria-label="显示图元"></td><td><input type="checkbox" aria-label="显示名称"></td></tr>
            <tr><td class="leaf">平整场地</td><td><input type="checkbox" aria-label="显示图元"></td><td><input type="checkbox" aria-label="显示名称"></td></tr>
            <tr><td class="leaf">散水</td><td><input type="checkbox" aria-label="显示图元"></td><td><input type="checkbox" aria-label="显示名称"></td></tr>
            <tr><td class="leaf">台阶</td><td><input type="checkbox" aria-label="显示图元"></td><td><input type="checkbox" aria-label="显示名称"></td></tr>
            <tr><td class="leaf">后浇带</td><td><input type="checkbox" aria-label="显示图元"></td><td><input type="checkbox" aria-label="显示名称"></td></tr>
            <tr><td class="leaf">挑檐</td><td><input type="checkbox" aria-label="显示图元"></td><td><input type="checkbox" aria-label="显示名称"></td></tr>
            <tr><td class="leaf">雨蓬</td><td><input type="checkbox" aria-label="显示图元"></td><td><input type="checkbox" aria-label="显示名称"></td></tr>
            <tr><td class="leaf">阳台</td><td><input type="checkbox" aria-label="显示图元"></td><td><input type="checkbox" aria-label="显示名称"></td></tr>
            <tr><td class="leaf">屋面</td><td><input type="checkbox" aria-label="显示图元"></td><td><input type="checkbox" aria-label="显示名称"></td></tr>
            <tr><td class="leaf">保温层</td><td><input type="checkbox" aria-label="显示图元"></td><td><input type="checkbox" aria-label="显示名称"></td></tr>
            <tr><td class="leaf">栏板</td><td><input type="checkbox" aria-label="显示图元"></td><td><input type="checkbox" aria-label="显示名称"></td></tr>
            <tr><td class="leaf">压顶</td><td><input type="checkbox" aria-label="显示图元"></td><td><input type="checkbox" aria-label="显示名称"></td></tr>
            <tr><td class="leaf">栏杆扶手</td><td><input type="checkbox" aria-label="显示图元"></td><td><input type="checkbox" aria-label="显示名称"></td></tr>
            <tr><td class="leaf end">脚手架</td><td><input type="checkbox" checked aria-label="显示图元"></td><td><input type="checkbox" aria-label="显示名称"></td></tr>
            <tr><td class="node last"><button class="pm" aria-label="收起"></button>自定义</td><td><input type="checkbox" class="mixed" aria-label="显示图元"></td><td><input type="checkbox" aria-label="显示名称"></td></tr>
            <tr><td></td><td><input type="checkbox" aria-label="显示图元"></td><td><input type="checkbox" aria-label="显示名称"></td></tr>
          </tbody>
        </table>
        <span class="thumb"></span>
      </div>
      <div class="dfoot"><button>恢复默认设置</button></div>
      <span class="meter"></span>
    </aside>
  </main>

  <footer class="status">
    <span class="s-xy">X = -3224 Y = -978</span>
    <span class="s-h">层高： 3</span>
    <span class="s-e">标高： -0.05~2.95</span>
    <span class="s-n">0</span>
    <span class="s-hid">隐藏 : 0</span>
    <div class="snaps">
      <button aria-label="正交"><svg class="ic"><use href="#s-ortho"/></svg></button>
      <button class="on w" aria-label="捕捉"><svg class="ic"><use href="#s-snap"/></svg><span class="caret"></span></button>
      <button class="apart" aria-label="交点"><svg class="ic"><use href="#s-cross"/></svg></button>
      <button class="w apart" aria-label="角度"><svg class="ic"><use href="#s-angle"/></svg><span class="caret"></span></button>
      <button class="w" aria-label="动态输入"><svg class="ic"><use href="#s-plus"/></svg><span class="caret"></span></button>
      <button aria-label="图层选择"><svg class="ic"><use href="#s-layers"/></svg></button>
      <button aria-label="折线选择"><svg class="ic"><use href="#s-poly"/></svg></button>
    </div>
    <span>指定第一点</span>
  </footer>
  <div class="taskbar">
    <span class="task"><i class="pink"></i></span>
    <span class="task"><i class="pink"></i></span>
    <span class="task"><i class="pink"></i></span>
    <span class="task"><i class="folder"></i></span>
    <span class="task kfpy">KFPY</span>
    <span class="task live"><i class="ice"></i></span>
    <span class="task"><i class="leafy"></i></span>
  </div>
</div>
</body>
</html>
```

FILE: styles.css
```
* { box-sizing: border-box; }
body {
  margin: 0;
  font: 12px/18px "Noto Sans", "Noto Sans CJK SC", sans-serif;
  color: #262626;
  background: #fff;
  --ink: #4b5468;
  --acc: #1a73e8;
  --soft: #d3e4fa;
}
button, input, select { font: inherit; color: inherit; }
button { border: 0; padding: 0; background: none; white-space: nowrap; }
ul { list-style: none; margin: 0; padding: 0; }
h1, h2 { margin: 0; font-size: 12px; font-weight: 400; }

/* icons */
.sprite { display: block; width: 0; height: 0; }
svg { fill: none; stroke: var(--ink); stroke-width: 1; flex: none; }
symbol { overflow: visible; }
.ic { width: 16px; height: 16px; }
.ic.l { width: 30px; height: 30px; }
.b { stroke: var(--acc); }
.fill { fill: var(--acc); }
.bf { stroke: var(--acc); fill: var(--soft); }
.kf { fill: var(--ink); }
.kl { fill: var(--soft); }
.wf { fill: #fff; }
.r { stroke: #e02020; }
.thick { stroke-width: 2; }
.pale { stroke: #a0a0a0; }
.dim { color: #b2b2b2; --ink: #b8b8b8; --acc: #b8b8b8; --soft: #f0f0f0; }
.caret {
  width: 0; height: 0;
  border: 3px solid transparent;
  border-top: 4px solid #777;
  border-bottom: 0;
  margin-left: 5px;
  flex: none;
}
.dim .caret { border-top-color: #b2b2b2; }

.app { height: 100vh; min-height: 600px; display: flex; flex-direction: column; }

/* header */
.top {
  display: grid;
  grid-template-columns: 50px 1fr;
  grid-template-rows: 22px 19px;
  box-shadow: inset 0 -1px #ececec;
}
.logo { grid-row: 1 / 3; position: relative; padding-left: 9px; text-align: left; }
.logo-mark { width: 29px; height: 29px; stroke: none; display: block; margin-bottom: 6px; }
.corner { position: absolute; right: 7px; bottom: 6px; border: 2px solid transparent; border-right-color: #555; border-bottom-color: #555; }
.titlebar { display: grid; grid-template-columns: 1fr auto 1fr; margin-left: -50px; height: 19px; }
.quick { display: flex; align-items: center; padding-left: 49px; }
.quick button { width: 26px; display: flex; justify-content: center; align-items: center; }
.quick .split { width: 35px; }
.quick .more { width: 16px; flex-direction: column; gap: 2px; }
.quick .more .caret { margin: 0; border-top-color: #444; }
.quick .more::before { content: ""; width: 6px; height: 1px; background: #444; }
.title { align-self: center; line-height: 20px; }
.winbtns { display: flex; justify-content: flex-end; align-items: center; gap: 20px; padding-right: 11px; }
.winbtns svg, .winbtns button { display: block; }
.menubar { display: flex; justify-content: space-between; }
.menus { display: flex; }
.menus button { padding: 0 13px; border-radius: 9px; line-height: 19px; }
.menus .on { background: #1890ff; color: #fff; }
.account { display: flex; align-items: center; height: 17px; }
.find { display: flex; align-items: center; width: 320px; height: 17px; border: 1px solid #dedede; border-radius: 2px; padding-right: 4px; }
.find input { flex: 1; min-width: 0; border: 0; padding: 0 3px; height: 15px; outline: 0; background: none; color: #000; }
.find .ic { width: 14px; height: 14px; }
.user { display: flex; margin-left: 6px; width: 68px; align-items: center; gap: 1px; color: #444; }
.avatar { width: 16px; height: 16px; stroke: none; }
.acts { display: flex; width: 86px; justify-content: space-between; margin: 0 5px 0 7px; }
.acts button { display: flex; align-items: center; }
.acts .help { font-size: 15px; color: #4b5468; }
.acts .help .caret { margin-left: 1px; }

/* ribbon */
.ribbon { display: flex; border-bottom: 1px solid #d4d4d4; padding: 2px 0 4px; height: 99px; flex: none; }
.group { flex: none; display: flex; flex-direction: column; padding-top: 1px; border-right: 1px solid #d9d9d9; }
.cmds { display: grid; grid-auto-flow: column; grid-template-rows: repeat(3, 23px); }
.cmd { display: flex; align-items: center; gap: 3px; }
.cmd .caret { margin-left: 4px; }
.big { grid-row: span 3; display: flex; flex-direction: column; align-items: center; gap: 4px; padding-top: 3px; }
.big .caret { margin: 4px 0 0; }
.gname { display: flex; justify-content: center; align-items: center; padding-top: 4px; line-height: 18px; }
.low { padding: 6px 0 0 2px; height: 24px; }
.g-select { width: 233px; }
.g-select .cmds { grid-template-columns: 52px 98px 1fr; }
.g-select .big { padding-left: 4px; }
.g-sheet { width: 194px; }
.g-sheet .cmds { grid-template-columns: 79px 1fr; padding-left: 8px; }
.g-common { width: 276px; }
.g-common .cmds { grid-template-columns: 67px 112px 1fr; padding-left: 8px; }
.g-modify { width: 237px; }
.g-modify .cmds { grid-template-columns: 54px 54px 62px 1fr; padding-left: 8px; }
.g-draw { width: 67px; }
.g-draw .cmds { grid-template-columns: 31px 1fr; padding-left: 6px; align-items: center; }
.tool { display: flex; align-items: center; width: 21px; height: 19px; padding-left: 2px; border-radius: 2px; }
.tool.on { background: #c3d9f2; }
.g-detect { width: 266px; }
.g-detect .cmds { grid-template-columns: 80px 80px 1fr; }
.g-detect .big + .big { padding-right: 8px; }
.g-smart { width: 78px; }
.g-smart .big { padding-right: 15px; }
.g-second { width: 126px; }
.g-second .cmds { padding-left: 8px; }

/* options bar */
.options { display: flex; align-items: center; gap: 4px; height: 26px; padding: 0 3px; background: #f0f0f0; border-left: 1px solid #d4d4d4; border-right: 1px solid #d4d4d4; flex: none; }
.options select {
  appearance: none;
  width: 98px; height: 22px;
  border: 1px solid #d9d9d9; border-radius: 3px;
  padding: 0 1px; outline: 0;
  background: #fff url("data:image/svg+xml,%3Csvg xmlns='http://www.w3.org/2000/svg' width='6' height='4'%3E%3Cpath fill='%23444' d='M0 0h6L3 4z'/%3E%3C/svg%3E") no-repeat right 4px center;
}
.options .narrow { width: 57px; }
.offs { display: flex; align-items: center; color: #808080; gap: 1px; margin-left: -2px; }
.offs label { width: 17px; }
.spin { position: relative; display: flex; width: 60px; }
.spin input { width: 100%; height: 22px; border: 1px solid #d9d9d9; border-radius: 3px; padding: 0 2px; outline: 0; background: #fff; }
.ud { position: absolute; right: 4px; top: 5px; width: 6px; height: 12px; }
.ud::before, .ud::after { content: ""; display: block; border: 3px solid transparent; }
.ud::before { border-top: 0; border-bottom: 4px solid #444; margin-bottom: 4px; }
.ud::after { border-bottom: 0; border-top: 4px solid #444; }

/* work area */
.work { flex: 1; min-height: 0; display: flex; }
.panel { border: 1px solid #d4d4d4; background: #fff; display: flex; flex-direction: column; min-height: 0; }
.grip { height: 11px; flex: none; background: #e6e6e6; display: flex; justify-content: flex-end; }
.grip button { margin-right: 1px; --ink: #888; }
.grip svg { width: 12px; height: 11px; display: block; }
.ptitle { height: 22px; line-height: 19px; padding-left: 8px; color: #777; background: #f0f0f0; border: solid #d9d9d9; border-width: 1px 0; flex: none; }
.nav { width: 210px; margin-right: 4px; flex: none; }
.navtools { display: flex; align-items: center; height: 28px; border-bottom: 1px solid #d4d4d4; padding: 0 1px 0 0; gap: 4px; flex: none; }
.navtools button { display: flex; align-items: center; justify-content: center; width: 24px; height: 22px; border-radius: 3px; }
.navtools .on { background: #c3d9f2; }
.grow { flex: 1; }
.tree { padding-top: 3px; overflow: hidden; }
.tree li { height: 24px; line-height: 24px; padding-left: 23px; display: flex; align-items: center; }
.shut::before, .open::before { content: ""; flex: none; }
.tree .shut::before { border: 4px solid transparent; border-left: 4px solid #777; border-right: 0; margin: 0 7px 2px -11px; }
.tree .open::before { border: 3px solid transparent; border-top: 4px solid #777; border-bottom: 0; margin: 0 6px 2px -12px; }
.pad { width: 10px; height: 12px; margin-left: 3px; }
.tree .kid { padding-left: 40px; }
.kid span { display: flex; align-items: center; gap: 6px; height: 21px; padding: 0 8px 0 3px; border-radius: 3px; }
.sel span { background: #c3d9f2; }
.side { width: 280px; display: flex; flex-direction: column; gap: 4px; flex: none; min-height: 0; }
.comps { height: 299px; flex: none; }
.props { flex: 1; }
.tabs { display: flex; height: 23px; background: #f0f0f0; border: solid #c9c9c9; border-width: 1px 0; flex: none; }
.tabs button { width: 65px; border-right: 1px solid #c9c9c9; color: #808080; background: #dedede; }
.tabs .on { font-weight: 700; color: #262626; background: #f0f0f0; }
.comptools { display: flex; align-items: center; height: 28px; border-bottom: 1px solid #e2e2e2; padding-left: 3px; flex: none; gap: 12px; }
.comptools .cmd { gap: 4px; }
.comptools .caret { margin: 0 -2px 0 3px; border-top-color: #999; }
.over { width: 11px; height: 20px; border: 1px solid #e6e6e6; border-radius: 2px; margin: 0 1px 0 auto; }
.over svg { width: 8px; height: 6px; display: block; fill: #333; stroke: none; }
.compfind { display: flex; align-items: center; height: 19px; border-bottom: 1px solid #e2e2e2; padding-right: 5px; flex: none; }
.compfind input { flex: 1; border: 0; outline: 0; padding: 0 2px; height: 18px; min-width: 0; }
.compfind input::placeholder { color: #999; opacity: 1; }
.compfind .ic { width: 13px; height: 13px; }
.ctree { padding-top: 3px; }
.ctree li { display: flex; align-items: center; height: 24px; padding-left: 13px; }
.ctree .open::before { border: 4px solid transparent; border-top: 4px solid #777; border-bottom: 0; margin-right: 2px; }
.ctree .two { padding-left: 33px; }
.ctree .three { padding-left: 62px; }
.pick { width: 101px; height: 21px; line-height: 20px; padding-left: 3px; background: #c3d9f2; border-radius: 3px; margin-left: -2px; }

/* tables */
table { border-spacing: 0; table-layout: fixed; }
th, td { height: 21px; padding: 2px 0 0; font-weight: 400; border: solid #dcdcdc; border-width: 0 1px 1px 0; line-height: 18px; white-space: nowrap; overflow: hidden; }
.pbody { flex: 1; min-height: 0; overflow: hidden; background: linear-gradient(to right, #eee 22px, #fff 22px); }
.ptable { width: 277px; background: #fff; }
.ptable .no { width: 22px; }
.ptable .nm { width: 101px; }
.ptable .vl { width: 113px; }
.ptable td { padding-left: 3px; }
.ptable td:first-child { background: #f0f0f0; text-align: center; padding-left: 0; border-color: #c4c4c4; }
.ptable td:last-child { padding-left: 0; text-align: center; }
.key { color: #1a55ff; }
.mute { color: #8c8c8c; }
.pm { position: relative; width: 13px; height: 13px; border: 1px solid #888; border-radius: 2px; background: #fff; margin: -4px 6px 0 0; vertical-align: middle; }
.pm::before, .plus::after { content: ""; position: absolute; left: 3px; top: 5px; width: 5px; height: 1px; background: #333; }
.plus::after { left: 5px; top: 3px; width: 1px; height: 5px; }
.ptable .pm { margin-left: -1px; }
input[type="checkbox"] { appearance: none; position: relative; display: block; width: 14px; height: 14px; margin: 0 auto 2px; border: 1px solid #7d7d7d; border-radius: 2px; background: #fff; }
input[type="checkbox"]:checked { background: #2b7de1; border-color: #2b7de1; }
input[type="checkbox"]:checked::after { content: ""; position: absolute; left: 4px; top: 1px; width: 4px; height: 8px; border: solid #fff; border-width: 0 2px 2px 0; transform: rotate(40deg); }
input.mixed::after { content: ""; position: absolute; inset: 1px; border: 1px solid #2b8af0; background: #99c9ff; }

/* canvas */
.gutter { width: 4px; flex: none; display: flex; align-items: center; }
.handle { width: 4px; height: 100px; background: #5c6670; display: flex; align-items: center; }
.handle::before { content: ""; border: 3px solid transparent; border-right: 3px solid #c8ccd0; border-left: 0; }
.handle.r::before { border: 3px solid transparent; border-left: 3px solid #c8ccd0; border-right: 0; }
.canvas { position: relative; flex: 1; min-width: 0; background: #000; overflow: hidden; }
.drawing { display: block; stroke: none; }
.pads { fill: #028a45; }
.edges { stroke: #00e676; stroke-width: 2; }
.ax { font: 15px "Liberation Sans", sans-serif; text-anchor: middle; }
.ax.y { fill: #00ff00; }
.ax.x { fill: #ff0000; }
.viewbar { position: absolute; top: 0; right: 0; width: 33px; height: 246px; padding: 12px 1px 0 0; background: #fff; border: 1px solid #d4d4d4; border-radius: 0 0 3px 3px; display: flex; flex-direction: column; align-items: center; gap: 9px; }
.viewbar button { display: flex; flex-direction: column; align-items: center; }
.viewbar svg { width: 20px; height: 20px; overflow: visible; }
.viewbar .drop { height: 30px; }
.viewbar .caret { margin: 8px 0 0; border-top-color: #444; }
.viewbar hr { width: 23px; height: 1px; border: 0; background: #555; margin: -2px 0; }

/* display settings */
.display { position: relative; width: 280px; flex: none; }
.dtabs { display: flex; align-items: flex-end; gap: 3px; height: 27px; padding-left: 2px; border-bottom: 1px solid #c9c9c9; flex: none; }
.dtabs button { width: 60px; height: 21px; background: #dedede; border-radius: 3px 3px 0 0; color: #444; }
.dtabs .on { width: 62px; height: 24px; background: #fff; color: #1a73e8; border: 1px solid #c9c9c9; border-bottom: 0; margin-bottom: -1px; }
.dbox { position: relative; flex: 1; min-height: 0; margin: 2px 3px 0 2px; border: 1px solid #d9d9d9; overflow: hidden; }
.dtable { width: 258px; }
.dtable .nm { width: 132px; }
.dtable .leaf { padding-left: 41px; background: linear-gradient(#dcdcdc, #dcdcdc) 9px 0 / 1px 100% no-repeat, linear-gradient(#dcdcdc, #dcdcdc) 19px 0 / 1px 100% no-repeat, linear-gradient(#dcdcdc, #dcdcdc) 19px 9px / 16px 1px no-repeat; }
.dtable .end { background-size: 1px 100%, 1px 10px, 16px 1px; }
.dtable .node { padding-left: 12px; background: linear-gradient(#dcdcdc, #dcdcdc) 9px 0 / 1px 100% no-repeat; }
.dtable .last { background-size: 1px 10px; }
.thumb { position: absolute; right: 3px; bottom: 55px; width: 8px; height: 234px; border-radius: 4px; background: #c9c9c9; }
.dfoot { display: flex; justify-content: flex-end; padding: 6px 8px; height: 38px; flex: none; }
.dfoot button { width: 90px; height: 26px; border: 1px solid #c9c9c9; border-radius: 3px; background: #fff; }
.meter { position: absolute; right: 1px; bottom: -8px; width: 8px; height: 57px; border-radius: 4px; border: 1px solid #555; z-index: 1; background: linear-gradient(#555 19px, transparent 19px), repeating-linear-gradient(#2bd45c 0 2px, #46664c 2px 3px); }

/* status bar */
.status { display: flex; align-items: center; height: 31px; padding-left: 2px; background: #fcfcfc; flex: none; }
.s-xy { width: 263px; }
.s-h { width: 83px; }
.s-e { width: 133px; }
.s-n { width: 103px; }
.s-hid { width: 103px; }
.snaps { display: flex; gap: 3px; margin-right: 6px; }
.snaps button { width: 25px; height: 25px; border: 1px solid #8c8c8c; border-radius: 3px; display: flex; align-items: center; justify-content: center; background: #fff; }
.snaps .w { width: 36px; }
.snaps .apart { margin-left: 3px; }
.snaps .on { background: #d6e4fa; border-color: #2b7de1; }
.snaps .caret { border-top-color: #444; }

/* desktop taskbar strip */
.taskbar { display: flex; gap: 3px; height: 8px; padding-left: 53px; overflow: hidden; background: linear-gradient(#54695a 1px, #758f76 1px); flex: none; }
.task { width: 158px; height: 8px; padding: 3px 10px 0; border: solid #b4c2b6; border-width: 1px 1px 0; background: #8fa594; overflow: hidden; }
.task i { display: block; width: 30px; height: 8px; }
.pink { background: radial-gradient(circle at 16px 7px, #d8453c 4px, #f8e3da 5px); }
.folder { background: linear-gradient(12deg, #f3dc8a 50%, transparent 50%); }
.ice { background: #e4f1fb; border-radius: 6px 6px 0 0; }
.leafy { background: radial-gradient(circle at 20px 6px, #fff 4px, #4fb52b 5px, transparent 7px); }
.live { background: #a6b8aa; border-color: #fff; }
.kfpy { font-size: 12px; line-height: 12px; padding-top: 3px; color: #0000d0; }
```
